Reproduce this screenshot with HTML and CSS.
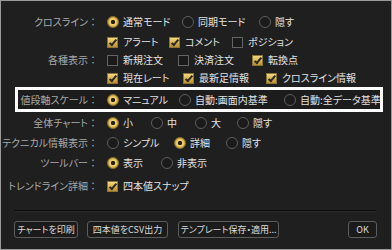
FILE: index.html
```html
<!DOCTYPE html>
<html lang="ja">
<head>
<meta charset="utf-8">
<link rel="stylesheet" href="styles.css">
</head>
<body>
<div class="dialog">
  <div class="row r-first">
    <div class="label">クロスライン<span class="colon">：</span></div>
    <div class="opts">
      <span class="opt w75"><i class="radio on"></i>通常モード</span>
      <span class="opt w77"><i class="radio"></i>同期モード</span>
      <span class="opt"><i class="radio"></i>隠す</span>
    </div>
  </div>
  <div class="row r-check">
    <div class="label"></div>
    <div class="opts">
      <span class="opt w62"><i class="check on"></i>アラート</span>
      <span class="opt w63"><i class="check on"></i>コメント</span>
      <span class="opt"><i class="check"></i>ポジション</span>
    </div>
  </div>
  <div class="row r-check">
    <div class="label">各種表示<span class="colon">：</span></div>
    <div class="opts">
      <span class="opt w71"><i class="check"></i>新規注文</span>
      <span class="opt w74"><i class="check"></i>決済注文</span>
      <span class="opt"><i class="check on"></i>転換点</span>
    </div>
  </div>
  <div class="row r-check">
    <div class="label"></div>
    <div class="opts">
      <span class="opt w76"><i class="check on"></i>現在レート</span>
      <span class="opt w83"><i class="check on"></i>最新足情報</span>
      <span class="opt"><i class="check on"></i>クロスライン情報</span>
    </div>
  </div>
  <div class="row r-highlight">
    <div class="label">値段軸スケール<span class="colon">：</span></div>
    <div class="opts">
      <span class="opt w72"><i class="radio on"></i>マニュアル</span>
      <span class="opt w105"><i class="radio"></i>自動:画面内基準</span>
      <span class="opt"><i class="radio"></i>自動:全データ基準</span>
    </div>
  </div>
  <div class="row r-radio">
    <div class="label">全体チャート<span class="colon">：</span></div>
    <div class="opts">
      <span class="opt w44"><i class="radio on"></i>小</span>
      <span class="opt w44"><i class="radio"></i>中</span>
      <span class="opt w42"><i class="radio"></i>大</span>
      <span class="opt"><i class="radio"></i>隠す</span>
    </div>
  </div>
  <div class="row r-radio">
    <div class="label">テクニカル情報表示<span class="colon">：</span></div>
    <div class="opts">
      <span class="opt w67"><i class="radio"></i>シンプル</span>
      <span class="opt w52"><i class="radio on"></i>詳細</span>
      <span class="opt"><i class="radio"></i>隠す</span>
    </div>
  </div>
  <div class="row r-radio">
    <div class="label">ツールバー<span class="colon">：</span></div>
    <div class="opts">
      <span class="opt w54"><i class="radio on"></i>表示</span>
      <span class="opt"><i class="radio"></i>非表示</span>
    </div>
  </div>
  <div class="row r-last">
    <div class="label">トレンドライン詳細<span class="colon">：</span></div>
    <div class="opts">
      <span class="opt"><i class="check on"></i>四本値スナップ</span>
    </div>
  </div>
  <div class="separator"></div>
  <div class="footer">
    <button class="btn b-print">チャートを印刷</button>
    <button class="btn b-csv">四本値をCSV出力</button>
    <button class="btn b-tpl">テンプレート保存・適用...</button>
    <button class="btn b-ok">OK</button>
  </div>
</div>
</body>
</html>
```

FILE: styles.css
```css
html, body {
  margin: 0;
  padding: 0;
  background: #1e1e1e;
}

.dialog {
  box-sizing: border-box;
  width: 392px;
  height: 250px;
  border: 1px solid #9a9a9a;
  background: #1f1f1f;
  padding-top: 11px;
  font-family: "Noto Sans CJK JP", "Noto Sans", sans-serif;
  font-size: 10px;
  line-height: 1;
  font-feature-settings: "palt";
  color: #e2e2e2;
  overflow: hidden;
}

.row {
  display: flex;
  align-items: center;
}

.r-first { height: 20px; margin-bottom: 1px; }
.r-check { height: 18px; }
.r-radio { height: 20px; }
.r-last { height: 20px; margin-top: 3px; }

.r-highlight {
  box-sizing: border-box;
  height: 25px;
  margin: 0 8px 1px 14px;
  border: 3px solid #ffffff;
  background: #1c1c1c;
}

.label {
  flex: none;
  box-sizing: border-box;
  width: 97px;
  text-align: right;
  color: #a9a9a9;
  white-space: nowrap;
}

.r-highlight .label {
  width: 80px;
}

.colon {
  font-feature-settings: normal;
}

.opts {
  display: flex;
  align-items: center;
  margin-left: 9px;
}

.opt {
  display: flex;
  align-items: center;
  white-space: nowrap;
}

.w42 { width: 42px; }
.w44 { width: 44px; }
.w52 { width: 52px; }
.w54 { width: 54px; }
.w62 { width: 62px; }
.w63 { width: 63px; }
.w67 { width: 67px; }
.w71 { width: 71px; }
.w72 { width: 72px; }
.w74 { width: 74px; }
.w75 { width: 75px; }
.w76 { width: 76px; }
.w77 { width: 77px; }
.w83 { width: 83px; }
.w105 { width: 105px; }

.radio {
  flex: none;
  box-sizing: border-box;
  width: 12px;
  height: 12px;
  margin-right: 4px;
  border-radius: 50%;
  border: 1px solid #5e5e5e;
  background: #1b1b1b;
}

.radio.on {
  border-color: #8c7433;
  background: radial-gradient(circle at 50% 50%, #2a2210 0, #2a2210 1.8px, #f4d778 2.6px, #e2bd55 4px, #b68b2c 5.5px);
}

.check {
  position: relative;
  flex: none;
  box-sizing: border-box;
  width: 11px;
  height: 11px;
  margin-right: 5px;
  border: 1px solid #646464;
  background: #1a1a1a;
}

.check.on {
  border-color: #8a7436;
  background: linear-gradient(#f3d780, #d8b254 55%, #b88f31);
}

.check.on::after {
  content: "";
  position: absolute;
  left: 3px;
  top: 0;
  width: 2px;
  height: 6px;
  border: solid #2a2a22;
  border-width: 0 2px 2px 0;
  transform: rotate(40deg);
}

.separator {
  height: 1px;
  margin: 14px 15px 0 13px;
  background: #0b0b0b;
  border-bottom: 1px solid #2a2a2a;
}

.footer {
  display: flex;
  align-items: center;
  gap: 9px;
  margin: 9px 14px 0 13px;
}

.btn {
  box-sizing: border-box;
  height: 17px;
  padding: 0;
  border: 1px solid #5c5c5c;
  border-radius: 3px;
  background: #1b1b1b;
  color: #dcdcdc;
  font-family: inherit;
  font-size: 9px;
  line-height: 1;
  font-feature-settings: "palt";
  white-space: nowrap;
  overflow: hidden;
}

.b-print { width: 64px; }
.b-csv { width: 81px; }
.b-tpl { width: 101px; margin-left: 1px; }
.b-ok { width: 29px; margin-left: auto; }
```
